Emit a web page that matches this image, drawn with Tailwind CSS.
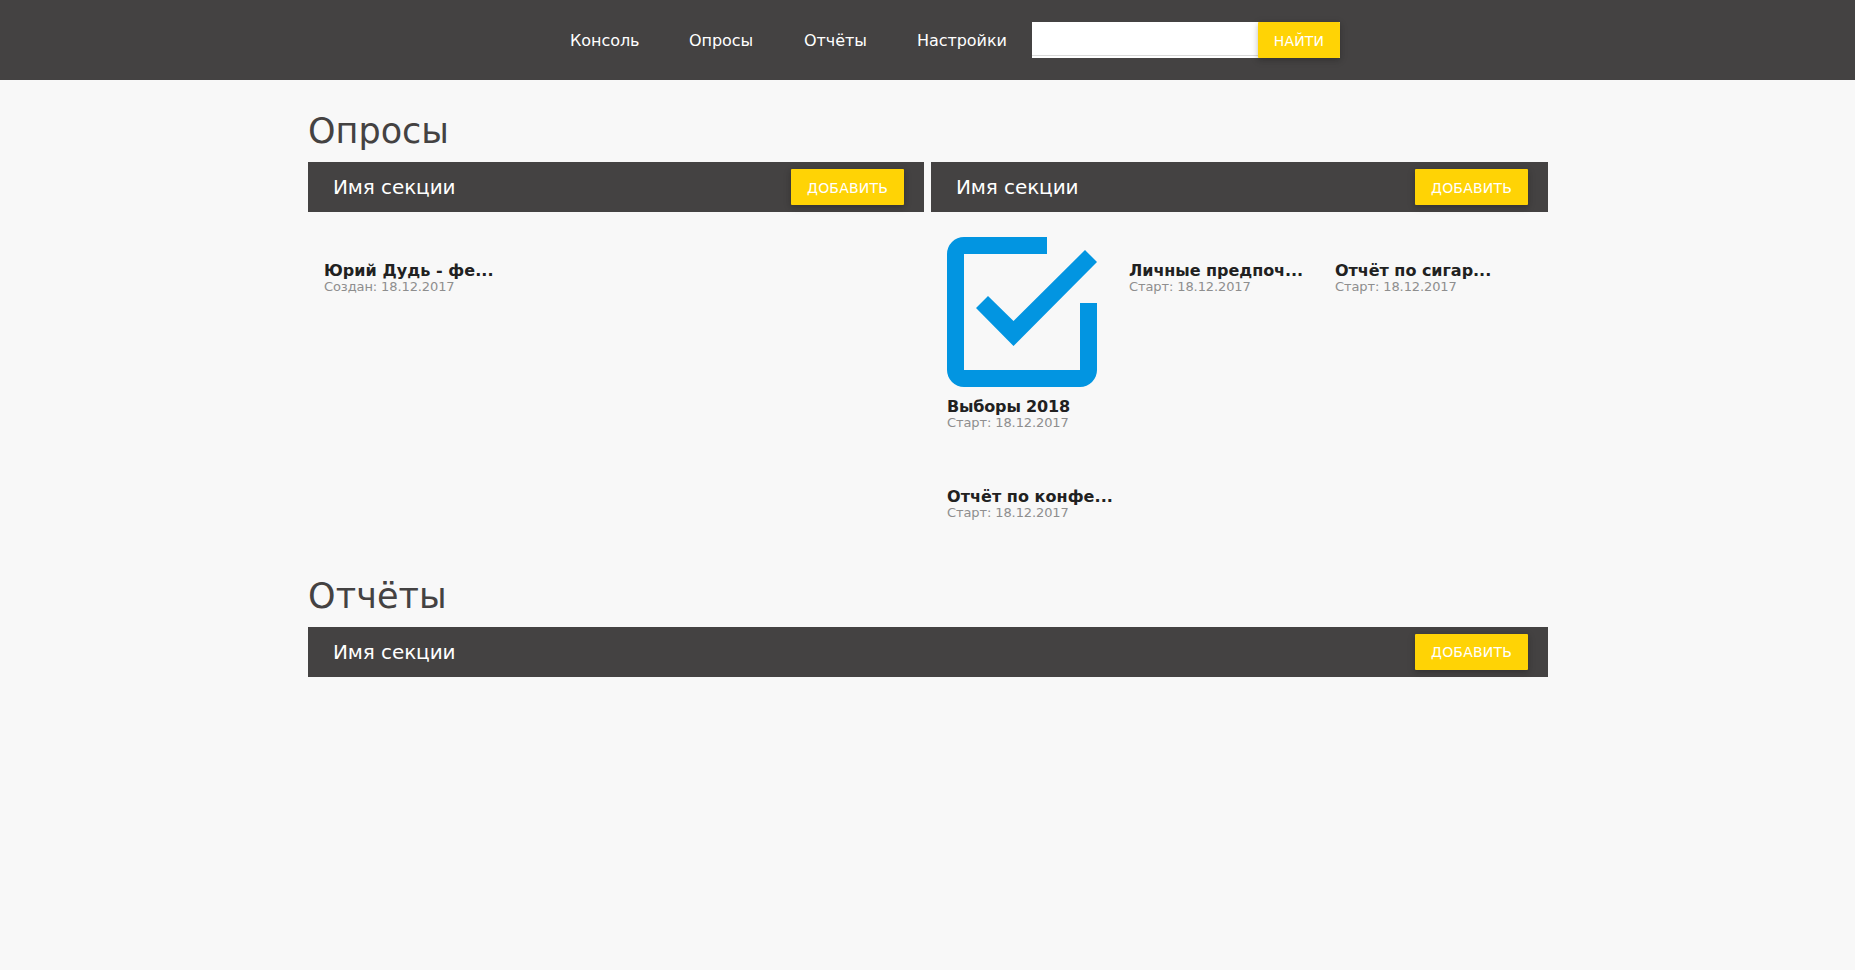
<!DOCTYPE html>
<html lang="ru">
<head>
<meta charset="utf-8">
<title>Опросы</title>
<script src="https://cdn.jsdelivr.net/npm/@tailwindcss/browser@4"></script>
</head>
<body class="min-h-screen bg-[#f8f8f8] font-['DejaVu_Sans',sans-serif] text-base text-[#212121]">
<header class="flex h-20 items-center bg-[#444242] pl-[545px] text-white">
  <nav class="flex leading-[80px] tracking-[-0.05px] pt-0.5">
    <a class="w-[119px] pl-[25px]">Консоль</a>
    <a class="w-[115px] pl-[25px]">Опросы</a>
    <a class="w-[113px] pl-[25px]">Отчёты</a>
    <a class="w-[140px] pl-[25px]">Настройки</a>
  </nav>
  <form class="flex h-9 w-[308px] bg-white">
    <input class="h-[34px] w-[226px] border-b border-[#d9d9d9] outline-none" type="text">
    <button type="button" class="h-9 w-[82px] rounded-[1px] bg-[#ffd305] text-center text-sm leading-[38px] tracking-[0.2px] text-white shadow-[0_2px_5px_0_rgba(0,0,0,0.16),0_2px_10px_0_rgba(0,0,0,0.12)]">НАЙТИ</button>
  </form>
</header>
<main class="ml-[308px] w-[1240px]">
  <h1 class="h-[82px] pt-[31px] text-[35px] leading-[40px] text-[#444242]">Опросы</h1>
  <div class="flex h-[383px] gap-[7px]">
    <section class="w-[616px]">
      <div class="flex h-[50px] items-center justify-between bg-[#444242] pr-5 pl-[25px] text-white">
        <h2 class="text-xl tracking-[-0.1px]">Имя секции</h2>
        <button type="button" class="h-9 w-[113px] rounded-[1px] bg-[#ffd305] text-sm leading-[38px] tracking-[0.2px] shadow-[0_2px_5px_0_rgba(0,0,0,0.16),0_2px_10px_0_rgba(0,0,0,0.12)]">ДОБАВИТЬ</button>
      </div>
      <div class="pt-[51px] pl-4">
        <h3 class="font-bold leading-4 tracking-[0.05px]">Юрий Дудь - фе...</h3>
        <p class="text-[13px] leading-4 tracking-[-0.1px] text-[#8e8e8e]">Создан: 18.12.2017</p>
      </div>
    </section>
    <section class="w-[617px]">
      <div class="flex h-[50px] items-center justify-between bg-[#444242] pr-5 pl-[25px] text-white">
        <h2 class="text-xl tracking-[-0.1px]">Имя секции</h2>
        <button type="button" class="h-9 w-[113px] rounded-[1px] bg-[#ffd305] text-sm leading-[38px] tracking-[0.2px] shadow-[0_2px_5px_0_rgba(0,0,0,0.16),0_2px_10px_0_rgba(0,0,0,0.12)]">ДОБАВИТЬ</button>
      </div>
      <div class="flex h-[277px] pt-[25px] pl-4">
        <article class="w-[182px]">
          <svg class="mb-3 size-[150px] fill-[#0295e1]" viewBox="0 0 150 150">
            <path d="M100 0H17A17 17 0 0 0 0 17V133A17 17 0 0 0 17 150H133A17 17 0 0 0 150 133V66H133V133H17V17H100Z"/>
            <path d="M29 71L41 59L66.500 84L138 13L150 25L66.500 109Z"/>
          </svg>
          <h3 class="font-bold leading-4 tracking-[-0.18px]">Выборы 2018</h3>
          <p class="text-[13px] leading-4 tracking-[-0.1px] text-[#8e8e8e]">Старт: 18.12.2017</p>
        </article>
        <article class="w-[206px] pt-[26px]">
          <h3 class="font-bold leading-4 tracking-[-0.05px]">Личные предпоч...</h3>
          <p class="text-[13px] leading-4 tracking-[-0.1px] text-[#8e8e8e]">Старт: 18.12.2017</p>
        </article>
        <article class="pt-[26px]">
          <h3 class="font-bold leading-4 tracking-[-0.03px]">Отчёт по сигар...</h3>
          <p class="text-[13px] leading-4 tracking-[-0.1px] text-[#8e8e8e]">Старт: 18.12.2017</p>
        </article>
      </div>
      <article class="pl-4">
        <h3 class="font-bold leading-4 tracking-[0.05px]">Отчёт по конфе...</h3>
        <p class="text-[13px] leading-4 tracking-[-0.1px] text-[#8e8e8e]">Старт: 18.12.2017</p>
      </article>
    </section>
  </div>
  <h1 class="h-[82px] pt-[31px] text-[35px] leading-[40px] tracking-[0.1px] text-[#444242]">Отчёты</h1>
  <section>
    <div class="flex h-[50px] items-center justify-between bg-[#444242] pr-5 pl-[25px] text-white">
      <h2 class="text-xl tracking-[-0.1px]">Имя секции</h2>
      <button type="button" class="h-9 w-[113px] rounded-[1px] bg-[#ffd305] text-sm leading-9 tracking-[0.2px] shadow-[0_2px_5px_0_rgba(0,0,0,0.16),0_2px_10px_0_rgba(0,0,0,0.12)]">ДОБАВИТЬ</button>
    </div>
  </section>
</main>
</body>
</html>
